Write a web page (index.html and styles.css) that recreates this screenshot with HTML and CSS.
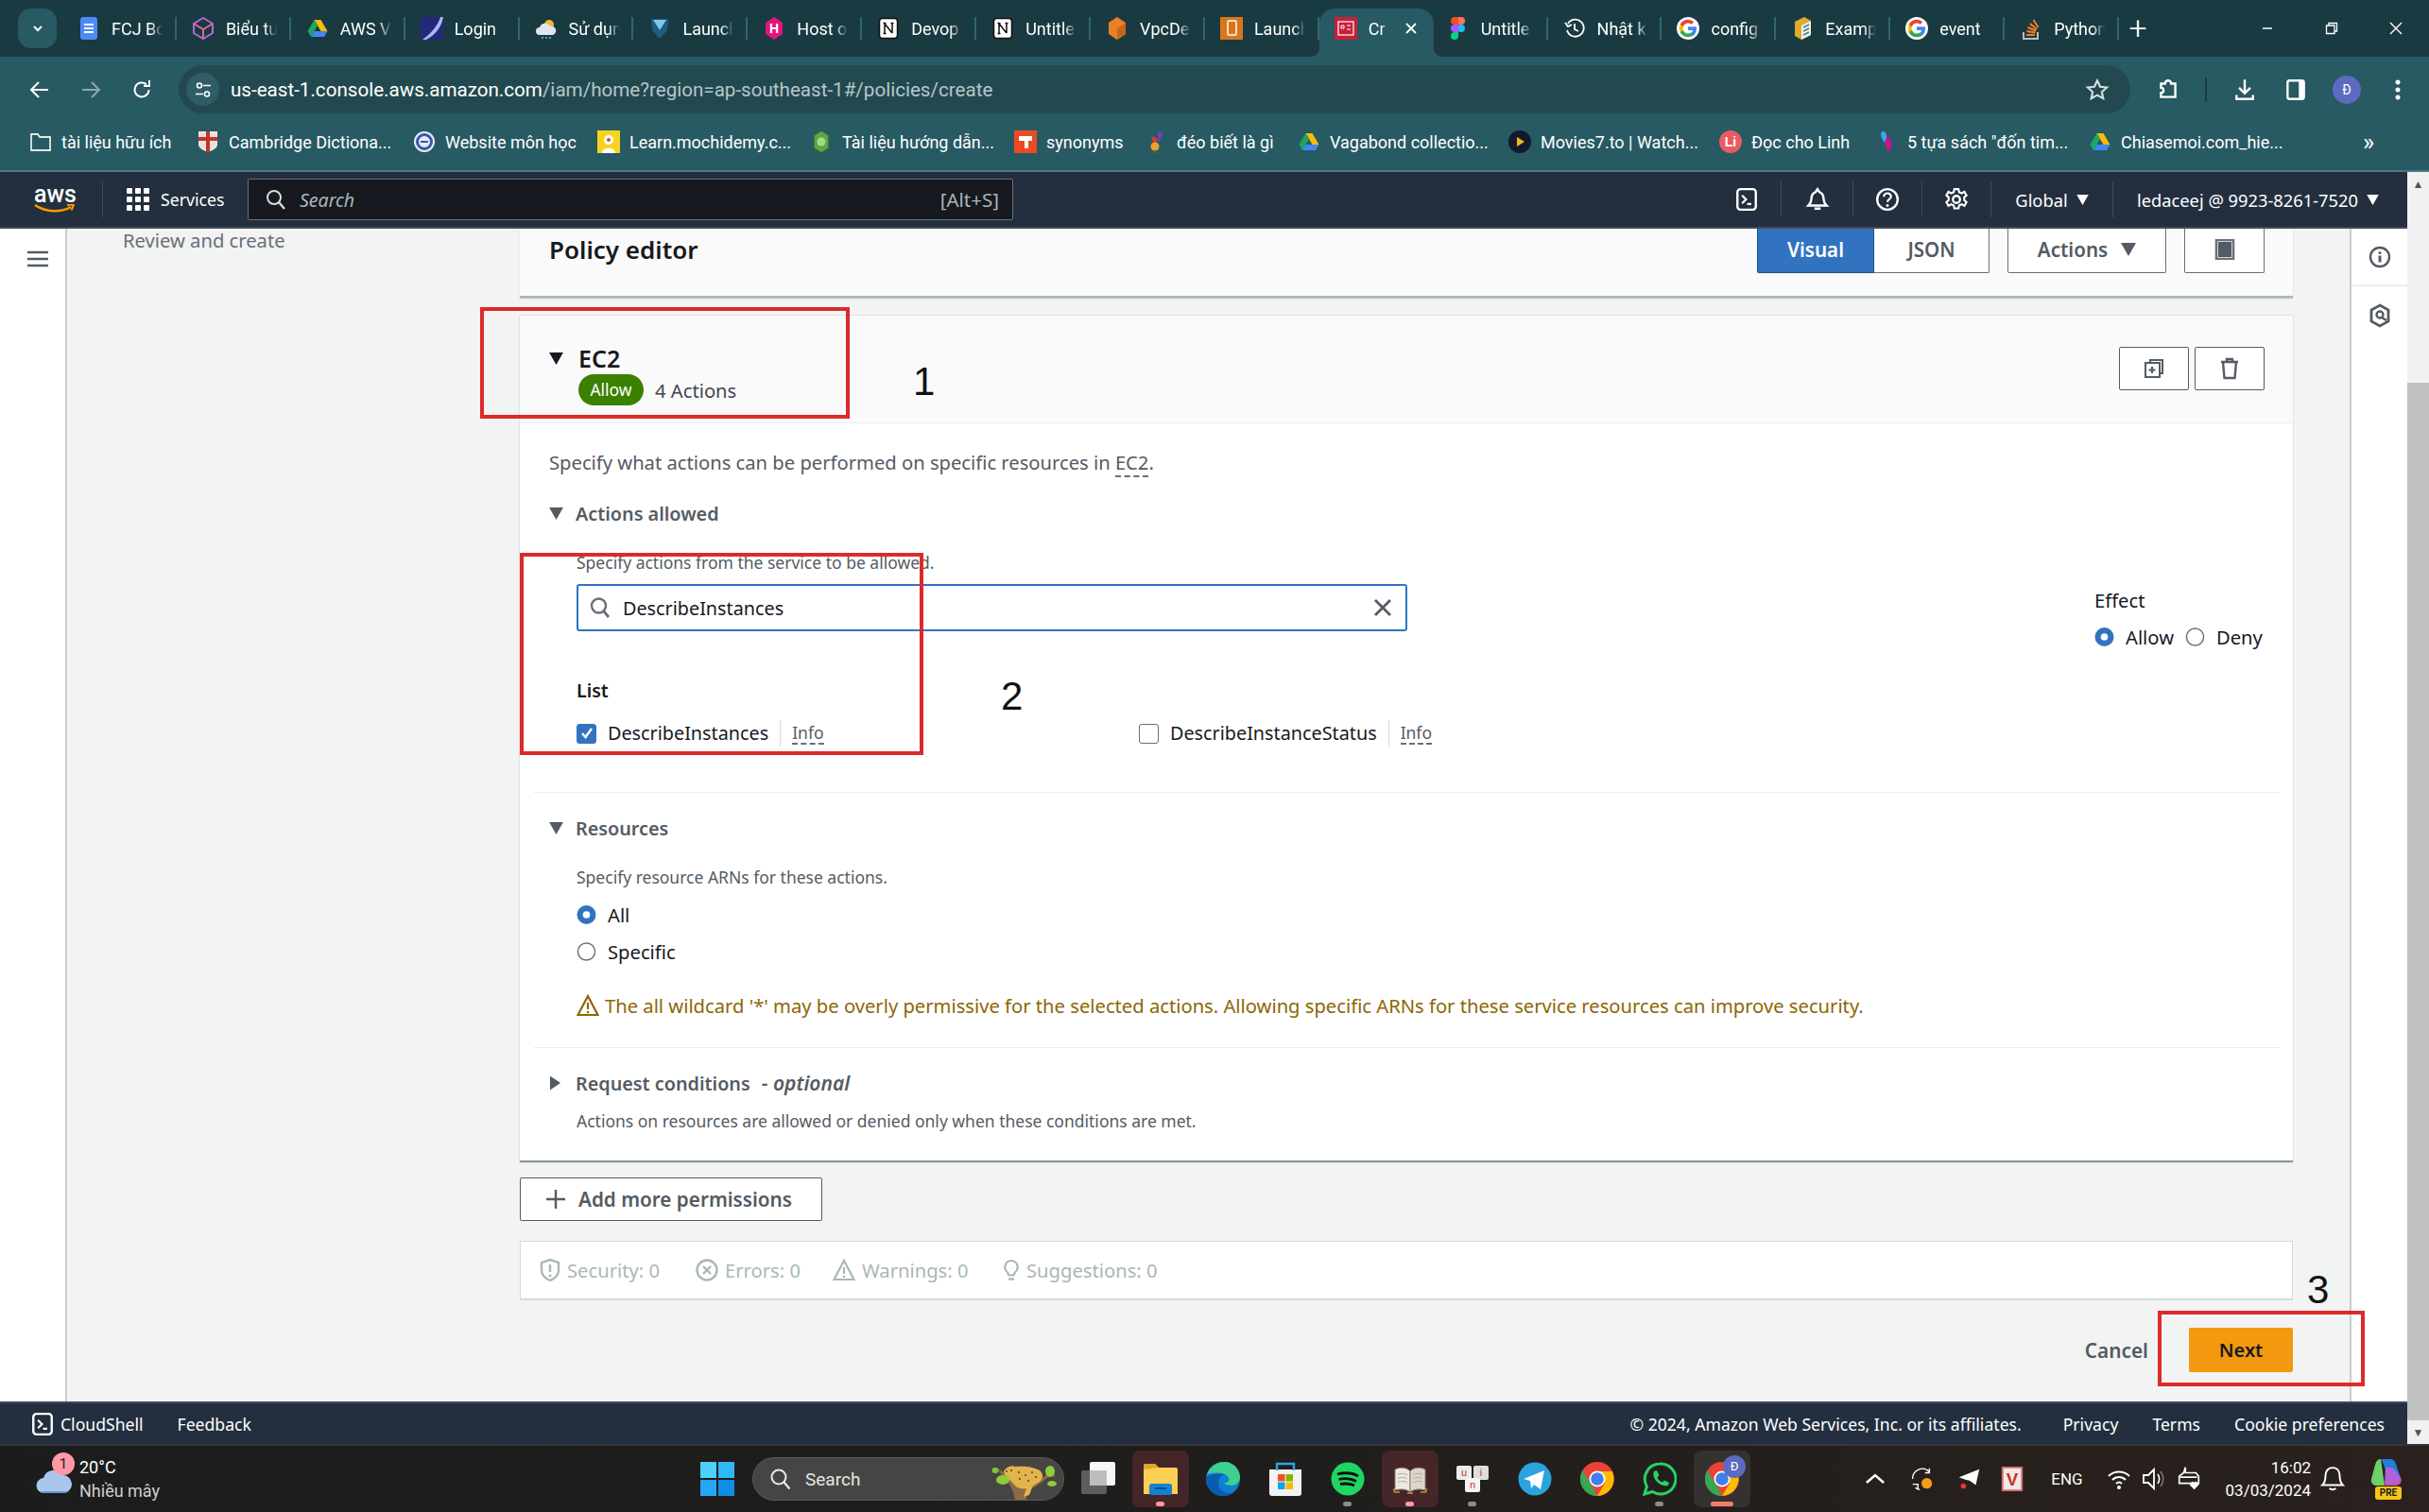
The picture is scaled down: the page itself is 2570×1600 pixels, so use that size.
FILE: index.html
```html
<!DOCTYPE html>
<html lang="en">
<head>
    <meta charset="UTF-8">
    <meta name="viewport" content="width=device-width, initial-scale=1.0">
    <title>Create policy | IAM</title>
    <link rel="stylesheet" href="styles.css">
</head>
<body>

<svg class="defs" width="0" height="0">
    <symbol id="i-g" viewBox="0 0 24 24">
        <circle cx="12" cy="12" r="12" fill="#fff"/>
        <path d="M21 12.2c0-.7-.1-1.3-.2-1.9H12v3.6h5.1c-.2 1.2-.9 2.2-1.9 2.9v2.4h3.1c1.8-1.7 2.7-4.1 2.7-7z" fill="#4285f4"/>
        <path d="M12 21.2c2.5 0 4.6-.8 6.200-2.200l-3.100-2.400c-.8.6-1.900.9-3.100.9-2.400 0-4.400-1.600-5.100-3.800H3.700v2.500c1.500 3 4.700 5 8.300 5z" fill="#34a853"/>
        <path d="M6.900 13.700c-.4-1.100-.4-2.300 0-3.400V7.800H3.700c-1.300 2.600-1.300 5.800 0 8.400z" fill="#fbbc05"/>
        <path d="M12 6.500c1.300 0 2.600.5 3.500 1.400l2.700-2.700C16.500 3.700 14.300 2.800 12 2.800c-3.600 0-6.800 2-8.300 5l3.200 2.500C7.600 8.100 9.600 6.500 12 6.500z" fill="#ea4335"/>
    </symbol>
    <symbol id="i-drive" viewBox="0 0 24 24">
        <path d="M8.500 3h7l7 12h-7z" fill="#fbbc05"/>
        <path d="M8.500 3l-7 12 3.500 6 7-12z" fill="#1fa463"/>
        <path d="M5 21h14l3.500-6h-14z" fill="#4285f4"/>
    </symbol>
    <symbol id="i-notion" viewBox="0 0 24 24">
        <rect x="2.500" y="1.500" width="19" height="21" rx="3" fill="#fff" stroke="#111" stroke-width="1.500"/>
        <path d="M8 7v10M16 7v10M8 7l8 10M6.500 6.500h3M14.500 6.500h3M6.500 17.500h3" fill="none" stroke="#111" stroke-width="1.500"/>
    </symbol>
    <symbol id="i-chrome" viewBox="0 0 36 36">
        <circle cx="18" cy="18" r="18" fill="#ea4335"/>
        <path d="M18 10h15.600A18 18 0 0118 36l8-13.500z" fill="#fbbc04"/>
        <path d="M2.400 9l8.600 14 7 13A18 18 0 012.400 9z" fill="#34a853"/>
        <circle cx="18" cy="18" r="8.500" fill="#fff"/>
        <circle cx="18" cy="18" r="6.800" fill="#3f7ff0"/>
    </symbol>
    <symbol id="i-radio-on" viewBox="0 0 22 22">
        <circle cx="11" cy="11" r="10.500" fill="#3273c0"/>
        <circle cx="11" cy="11" r="4" fill="#fff"/>
    </symbol>
    <symbol id="i-radio-off" viewBox="0 0 22 22">
        <circle cx="11" cy="11" r="9.500" fill="#fff" stroke="#687078" stroke-width="1.500"/>
    </symbol>
    <symbol id="i-term" viewBox="0 0 24 24">
        <rect x="3" y="2" width="18" height="20" rx="3" fill="none" stroke="#fff" stroke-width="2.200"/>
        <path d="M7.500 8l4 4-4 4M12.500 16.500h4" fill="none" stroke="#fff" stroke-width="2"/>
    </symbol>
    <symbol id="i-tri-down" viewBox="0 0 16 14">
        <path d="M0 0h16L8 14z"/>
    </symbol>
</svg>

<div class="tabstrip">
    <button class="tab-menu"><svg width="14" height="14" viewBox="0 0 14 14"><path d="M3 5l4 4 4-4" fill="none" stroke="#fff" stroke-width="2"/></svg></button>
    <div class="tab"><svg class="fav" viewBox="0 0 24 24"><rect x="3" y="0" width="18" height="24" rx="3" fill="#4c8bf5"/><path d="M7 8h10M7 12h10M7 16h10" stroke="#fff" stroke-width="2"/></svg><span class="tab-title">FCJ Bo</span></div>
    <div class="tab"><svg class="fav" viewBox="0 0 24 24"><path d="M12 1l10 6v10l-10 6-10-6V7z" fill="none" stroke="#b06ad8" stroke-width="2"/><path d="M2 7l10 6 10-6M12 13v10" fill="none" stroke="#e0679a" stroke-width="2"/></svg><span class="tab-title">Biểu tư</span></div>
    <div class="tab"><svg class="fav"><use href="#i-drive"/></svg><span class="tab-title">AWS V</span></div>
    <div class="tab"><svg class="fav" viewBox="0 0 24 24"><rect width="24" height="24" fill="#23297a"/><path d="M2 24C10 18 18 10 21 0h3C22 12 14 20 6 24z" fill="#a8b8f0"/></svg><span class="tab-title">Login</span></div>
    <div class="tab"><svg class="fav" viewBox="0 0 24 24"><circle cx="15" cy="8" r="5" fill="#f6b73c"/><path d="M5 19a4 4 0 010-8 6 6 0 0111-1 4.500 4.500 0 013 9z" fill="#dfe6ee"/><path d="M8 21v2M12 21v2M16 21v2" stroke="#7fb0e0" stroke-width="1.500"/></svg><span class="tab-title">Sử dụn</span></div>
    <div class="tab"><svg class="fav" viewBox="0 0 24 24"><path d="M3 2h18l-1 12-8 9-8-9z" fill="#1e5c80"/><path d="M5 3h14l-7 11z" fill="#7cc7ee"/></svg><span class="tab-title">Launch</span></div>
    <div class="tab"><svg class="fav" viewBox="0 0 24 24"><path d="M12 0l9 6v12l-9 6-9-6V6z" fill="#e6127f"/><text x="12" y="17" class="fav-letter">H</text></svg><span class="tab-title">Host o</span></div>
    <div class="tab"><svg class="fav"><use href="#i-notion"/></svg><span class="tab-title">Devop</span></div>
    <div class="tab"><svg class="fav"><use href="#i-notion"/></svg><span class="tab-title">Untitle</span></div>
    <div class="tab"><svg class="fav" viewBox="0 0 24 24"><path d="M12 0l9 6v12l-9 6-9-6V6z" fill="#e8822a"/><path d="M12 12l9-6v12l-9 6z" fill="#c9651a"/></svg><span class="tab-title">VpcDe</span></div>
    <div class="tab"><svg class="fav" viewBox="0 0 24 24"><rect width="24" height="24" fill="#d9761d"/><rect x="8" y="4" width="9" height="15" rx="1.500" fill="none" stroke="#fff" stroke-width="1.500"/></svg><span class="tab-title">Launch</span></div>
    <div class="tab tab-active"><svg class="fav" viewBox="0 0 24 24"><rect width="24" height="24" fill="#c7203a"/><rect x="4" y="5" width="16" height="14" fill="none" stroke="#fff" stroke-width="1.200"/><path d="M7 9h3v3H7zM13 9h4M13 13h4" stroke="#fff" fill="none"/></svg><span class="tab-title tab-title-short">Cr</span><svg class="tab-close" viewBox="0 0 14 14"><path d="M2 2l10 10M12 2L2 12" stroke="#fff" stroke-width="1.800"/></svg></div>
    <div class="tab tab-after"><svg class="fav" viewBox="0 0 24 24"><circle cx="15" cy="12" r="4" fill="#1abcfe"/><path d="M8 0h4v8H8a4 4 0 010-8z" fill="#f24e1e"/><path d="M12 0h3a4 4 0 010 8h-3z" fill="#ff7262"/><path d="M8 8h4v8H8a4 4 0 010-8z" fill="#a259ff"/><path d="M8 16h4v4a4 4 0 11-4-4z" fill="#0acf83"/></svg><span class="tab-title">Untitle</span></div>
    <div class="tab"><svg class="fav" viewBox="0 0 24 24"><path d="M5 7a9 9 0 11-1 7M2 6l3 4 4-2M12 7v6l4 2" fill="none" stroke="#fff" stroke-width="1.800"/></svg><span class="tab-title">Nhật k</span></div>
    <div class="tab"><svg class="fav"><use href="#i-g"/></svg><span class="tab-title">config</span></div>
    <div class="tab"><svg class="fav" viewBox="0 0 24 24"><path d="M4 5l10-5 7 4v15l-10 5-7-4z" fill="#e0a92e"/><path d="M11 9l10-5v15l-10 5z" fill="#f6f1d8"/><path d="M13 11l6-3M13 15l6-3M13 19l6-3" stroke="#3d7ab8" stroke-width="1.500"/></svg><span class="tab-title">Examp</span></div>
    <div class="tab"><svg class="fav"><use href="#i-g"/></svg><span class="tab-title">event</span></div>
    <div class="tab"><svg class="fav" viewBox="0 0 24 24"><path d="M4 16v7h15v-7" fill="none" stroke="#bcbbbb" stroke-width="2"/><path d="M7 19h9M7.500 15l9 1.500M8.500 11l8.500 3.500M11 7l7 6M14.500 3l5 8" stroke="#f48024" stroke-width="2"/></svg><span class="tab-title">Python</span></div>
    <div class="tab-new">+</div>
    <div class="win-controls">
        <svg class="win-btn" viewBox="0 0 14 14"><path d="M2 7h10" stroke="#fff" stroke-width="1.500"/></svg>
        <svg class="win-btn" viewBox="0 0 14 14"><path d="M1.500 4h8.500v8.500H1.500zM4 4V1.500h8.500V10H10" fill="none" stroke="#fff" stroke-width="1.300"/></svg>
        <svg class="win-btn" viewBox="0 0 14 14"><path d="M1 1l12 12M13 1L1 13" stroke="#fff" stroke-width="1.400"/></svg>
    </div>
</div>

<div class="toolbar">
    <button class="tool-btn"><svg width="22" height="22" viewBox="0 0 22 22"><path d="M20 11H3M10 3l-8 8 8 8" fill="none" stroke="#fff" stroke-width="2"/></svg></button>
    <button class="tool-btn"><svg width="22" height="22" viewBox="0 0 22 22"><path d="M2 11h17M12 3l8 8-8 8" fill="none" stroke="#8fa8ad" stroke-width="2"/></svg></button>
    <button class="tool-btn"><svg width="22" height="22" viewBox="0 0 22 22"><path d="M18.500 11a7.500 7.500 0 11-2.500-5.600M19 1v6h-6" fill="none" stroke="#fff" stroke-width="2"/></svg></button>
    <div class="omnibox">
        <span class="site-btn"><svg width="20" height="20" viewBox="0 0 20 20"><circle cx="6" cy="5.500" r="2.500" fill="none" stroke="#fff" stroke-width="1.600"/><circle cx="14" cy="14.500" r="2.500" fill="none" stroke="#fff" stroke-width="1.600"/><path d="M10 5.500h8M2 14.500h8" stroke="#fff" stroke-width="1.600"/></svg></span>
        <span class="url"><span class="url-host">us-east-1.console.aws.amazon.com</span>/iam/home?region=ap-southeast-1#/policies/create</span>
        <svg class="star" width="26" height="26" viewBox="0 0 24 24"><path d="M12 3l2.800 6 6.500.7-4.800 4.400 1.300 6.400-5.800-3.300-5.800 3.300 1.300-6.400L2.700 9.700 9.200 9z" fill="none" stroke="#d5dcdd" stroke-width="2"/></svg>
    </div>
    <button class="tool-btn tool-ext"><svg width="26" height="26" viewBox="0 0 24 24"><path d="M6 6h3a3 3 0 016 0h4v13H5v-4a2.500 2.500 0 000-5V6z" fill="none" stroke="#fff" stroke-width="2.200"/></svg></button>
    <span class="tool-sep"></span>
    <button class="tool-btn"><svg width="26" height="26" viewBox="0 0 24 24"><path d="M12 2v13M6.500 10l5.500 5.500 5.500-5.500M4 17v4h16v-4" fill="none" stroke="#fff" stroke-width="2.200"/></svg></button>
    <button class="tool-btn"><svg width="26" height="26" viewBox="0 0 24 24"><rect x="4" y="3" width="16" height="18" rx="2" fill="none" stroke="#fff" stroke-width="2.200"/><path d="M15 3v18h5V3z" fill="#fff"/></svg></button>
    <button class="tool-btn"><span class="avatar">Đ</span></button>
    <button class="tool-btn"><svg width="8" height="26" viewBox="0 0 8 26"><circle cx="4" cy="5" r="2.500" fill="#fff"/><circle cx="4" cy="13" r="2.500" fill="#fff"/><circle cx="4" cy="21" r="2.500" fill="#fff"/></svg></button>
</div>

<div class="bookmarks">
    <a class="bm"><svg class="fav-sm" viewBox="0 0 24 24"><path d="M2 4h7l2 3h11v14H2z" fill="none" stroke="#e3e8e9" stroke-width="1.800"/></svg>tài liệu hữu ích</a>
    <a class="bm"><svg class="fav-sm" viewBox="0 0 24 24"><path d="M2 1h20v14c0 4-5 6-10 8-5-2-10-4-10-8z" fill="#e8e3d8"/><path d="M12 1v22M2 9h20" stroke="#c4342a" stroke-width="4"/></svg>Cambridge Dictiona...</a>
    <a class="bm"><svg class="fav-sm" viewBox="0 0 24 24"><circle cx="12" cy="12" r="11" fill="#e8edf5"/><circle cx="12" cy="12" r="7.500" fill="none" stroke="#3a5aa8" stroke-width="3"/><path d="M8 12h8" stroke="#3a5aa8" stroke-width="2"/></svg>Website môn học</a>
    <a class="bm"><svg class="fav-sm" viewBox="0 0 24 24"><rect width="24" height="24" fill="#f7d31e"/><circle cx="12" cy="10" r="5" fill="#fff"/><path d="M5 24c0-7 14-7 14 0z" fill="#fff"/><circle cx="12" cy="10" r="2" fill="#c4562a"/></svg>Learn.mochidemy.c...</a>
    <a class="bm"><svg class="fav-sm" viewBox="0 0 24 24"><path d="M12 0l8 5v14l-8 5-8-5V5z" fill="#5aa84a" stroke="#2f6b32" stroke-width="1.500"/><circle cx="12" cy="12" r="4.500" fill="#a5d88a"/></svg>Tài liệu hướng dẫn...</a>
    <a class="bm"><svg class="fav-sm" viewBox="0 0 24 24"><rect width="24" height="24" fill="#ea4b25"/><path d="M5 6h14v5h-4v8h-4v-8H5z" fill="#fff"/></svg>synonyms</a>
    <a class="bm"><svg class="fav-sm" viewBox="0 0 24 24"><path d="M14 1l5 2-4 10z" fill="#7a3fc0"/><path d="M7 6l7 3-3 9z" fill="#d83a3a"/><circle cx="11" cy="17" r="4.500" fill="#e8a12e"/><path d="M10 21l1 3" stroke="#3a8a3a" stroke-width="2"/></svg>đéo biết là gì</a>
    <a class="bm"><svg class="fav-sm"><use href="#i-drive"/></svg>Vagabond collectio...</a>
    <a class="bm"><svg class="fav-sm" viewBox="0 0 24 24"><circle cx="12" cy="12" r="12" fill="#131a2b"/><path d="M9 7l8 5-8 5z" fill="#f5b81c"/></svg>Movies7.to | Watch...</a>
    <a class="bm"><svg class="fav-sm" viewBox="0 0 24 24"><circle cx="12" cy="12" r="12" fill="#ea5b5f"/><text x="12" y="17" class="fav-letter">Li</text></svg>Đọc cho Linh</a>
    <a class="bm"><svg class="fav-sm" viewBox="0 0 24 24"><path d="M8 1c5 0 5 8 2 12-3-3-6-12-2-12z" fill="#3aa7e8"/><path d="M12 7c7 1 7 11 2 16-3-4-1-7-4-10z" fill="#c4168c"/></svg>5 tựa sách "đốn tim...</a>
    <a class="bm"><svg class="fav-sm"><use href="#i-drive"/></svg>Chiasemoi.com_hie...</a>
    <span class="bm-more">»</span>
</div>

<div class="page">
    <div class="page-col">
        <nav class="aws-nav">
            <span class="aws-logo">
                <span class="aws-word">aws</span>
                <svg width="44" height="10" viewBox="0 0 44 10"><path d="M1 1c12 8 28 8 38 2" fill="none" stroke="#f90" stroke-width="2.400"/><path d="M35 1l7-.5-2.500 6" fill="none" stroke="#f90" stroke-width="2"/></svg>
            </span>
            <span class="services">
                <svg width="24" height="24" viewBox="0 0 24 24" fill="#fff"><rect width="6" height="6" rx="1"/><rect x="9" width="6" height="6" rx="1"/><rect x="18" width="6" height="6" rx="1"/><rect y="9" width="6" height="6" rx="1"/><rect x="9" y="9" width="6" height="6" rx="1"/><rect x="18" y="9" width="6" height="6" rx="1"/><rect y="18" width="6" height="6" rx="1"/><rect x="9" y="18" width="6" height="6" rx="1"/><rect x="18" y="18" width="6" height="6" rx="1"/></svg>
                Services
            </span>
            <div class="nav-search">
                <svg width="22" height="22" viewBox="0 0 22 22"><circle cx="9" cy="9" r="7" fill="none" stroke="#d5dbdb" stroke-width="2"/><path d="M14 14l6 7" stroke="#d5dbdb" stroke-width="2.400"/></svg>
                <span class="nav-search-ph">Search</span>
                <span class="nav-search-key">[Alt+S]</span>
            </div>
            <div class="nav-right">
                <span class="nav-cell cell-shell"><svg width="26" height="26"><use href="#i-term"/></svg></span>
                <span class="nav-cell cell-bell"><svg width="26" height="26" viewBox="0 0 24 24"><path d="M12 2l2 3c3 1 4 4 4 7 0 3 1 4 3 6H3c2-2 3-3 3-6 0-3 1-6 4-7z" fill="none" stroke="#fff" stroke-width="2.200"/><path d="M9 21h6" stroke="#fff" stroke-width="2.400"/></svg></span>
                <span class="nav-cell cell-help"><svg width="26" height="26" viewBox="0 0 24 24"><circle cx="12" cy="12" r="10" fill="none" stroke="#fff" stroke-width="2.200"/><path d="M8.500 9.500a3.500 3.500 0 117 0c0 2-3.500 2.500-3.500 5" fill="none" stroke="#fff" stroke-width="2"/><circle cx="12" cy="18" r="1.300" fill="#fff"/></svg></span>
                <span class="nav-cell cell-help"><svg width="26" height="26" viewBox="0 0 24 24"><circle cx="12" cy="12" r="3.500" fill="none" stroke="#fff" stroke-width="2.200"/><path d="M10 2h4l.7 3 2.500 1 2.600-1.500 2 3.500-2.200 2v2.800l2.200 2-2 3.500-2.600-1.500-2.500 1-.7 3h-4l-.7-3-2.500-1-2.600 1.500-2-3.500 2.200-2v-2.800l-2.200-2 2-3.500L6.800 6l2.500-1z" fill="none" stroke="#fff" stroke-width="2"/></svg></span>
                <span class="nav-cell cell-global">Global<svg class="nav-caret"><use href="#i-tri-down"/></svg></span>
                <span class="nav-cell cell-user">ledaceej @ 9923-8261-7520<svg class="nav-caret"><use href="#i-tri-down"/></svg></span>
            </div>
        </nav>

        <div class="console">
            <aside class="side-rail">
                <svg width="24" height="20" viewBox="0 0 24 20"><path d="M1 3h22M1 10h22M1 17h22" stroke="#545b64" stroke-width="2.400"/></svg>
            </aside>
            <div class="content">
                <div class="wizard-nav">Review and create</div>
                <main class="editor">
                    <section class="policy-head">
                        <h2 class="policy-title">Policy editor</h2>
                        <div class="policy-tools">
                            <span class="seg seg-on">Visual</span>
                            <span class="seg seg-json">JSON</span>
                            <span class="btn-actions">Actions<svg class="actions-caret"><use href="#i-tri-down"/></svg></span>
                            <span class="btn-panel"><svg width="22" height="22" viewBox="0 0 22 22"><rect x="2" y="1" width="18" height="20" fill="none" stroke="#687078" stroke-width="2.600"/><rect x="4" y="3" width="14" height="16" fill="#545b64"/></svg></span>
                        </div>
                    </section>

                    <section class="service-card">
                        <header class="service-head">
                            <svg class="tri-big"><use href="#i-tri-down"/></svg>
                            <div>
                                <div class="service-name">EC2</div>
                                <div class="service-sub"><span class="pill-allow">Allow</span>4 Actions</div>
                            </div>
                            <div class="service-tools">
                                <span class="btn-icon"><svg width="24" height="24" viewBox="0 0 24 24" fill="none" stroke="#545b64" stroke-width="2"><path d="M8 6V3h13v14h-3"/><path d="M5 6h13v15H3V6z"/><path d="M10 10v7M6.500 13.500h7" stroke-width="2.200"/></svg></span>
                                <span class="btn-icon"><svg width="24" height="24" viewBox="0 0 24 24" fill="none" stroke="#545b64" stroke-width="2.400"><path d="M3 5h18M9 5V2h6v3M5 5l1.500 17h11L19 5"/></svg></span>
                            </div>
                        </header>

                        <div class="service-body">
                            <p class="intro">Specify what actions can be performed on specific resources in <span class="dotted">EC2</span>.</p>

                            <div class="sec-head sec-actions"><svg class="tri"><use href="#i-tri-down"/></svg>Actions allowed</div>

                            <div class="actions-row">
                                <div class="actions-left">
                                    <p class="hint hint-actions">Specify actions from the service to be allowed.</p>
                                    <div class="filter">
                                        <svg width="22" height="24" viewBox="0 0 22 24"><circle cx="9.500" cy="10" r="7.500" fill="none" stroke="#687078" stroke-width="2.400"/><path d="M15 16l5 6" stroke="#687078" stroke-width="2.800"/></svg>
                                        <span class="filter-text">DescribeInstances</span>
                                        <svg class="filter-x" width="20" height="20" viewBox="0 0 20 20"><path d="M2 2l16 16M18 2L2 18" stroke="#545b64" stroke-width="2.800"/></svg>
                                    </div>
                                    <div class="group-name">List</div>
                                    <div class="check-grid">
                                        <label class="check"><span class="box box-on"><svg width="16" height="16" viewBox="0 0 16 16"><path d="M3 8l3.500 4L13 3" fill="none" stroke="#fff" stroke-width="2.400"/></svg></span><span class="check-text">DescribeInstances</span><span class="dotted info">Info</span></label>
                                        <label class="check"><span class="box"></span><span class="check-text">DescribeInstanceStatus</span><span class="dotted info">Info</span></label>
                                    </div>
                                </div>
                                <div class="effect">
                                    <div class="effect-label">Effect</div>
                                    <div class="effect-opts">
                                        <svg class="radio"><use href="#i-radio-on"/></svg><span class="effect-allow">Allow</span>
                                        <svg class="radio"><use href="#i-radio-off"/></svg><span>Deny</span>
                                    </div>
                                </div>
                            </div>

                            <div class="divider divider-a"></div>

                            <div class="sec-head sec-res"><svg class="tri"><use href="#i-tri-down"/></svg>Resources</div>
                            <p class="hint hint-res">Specify resource ARNs for these actions.</p>
                            <div class="radio-row radio-all"><svg class="radio"><use href="#i-radio-on"/></svg>All</div>
                            <div class="radio-row radio-spec"><svg class="radio"><use href="#i-radio-off"/></svg>Specific</div>
                            <div class="warn">
                                <svg width="24" height="24" viewBox="0 0 24 24"><path d="M12 2l10.500 20h-21z" fill="none" stroke="#8d6605" stroke-width="2.200"/><path d="M12 9v7" stroke="#8d6605" stroke-width="2.200"/><circle cx="12" cy="19" r="1.300" fill="#8d6605"/></svg>
                                <span>The all wildcard '*' may be overly permissive for the selected actions. Allowing specific ARNs for these service resources can improve security.</span>
                            </div>

                            <div class="divider divider-b"></div>

                            <div class="sec-head sec-req"><svg class="tri tri-right" viewBox="0 0 14 16"><path d="M1 0l12 8-12 8z"/></svg>Request conditions<em class="optional">- optional</em></div>
                            <p class="hint hint-req">Actions on resources are allowed or denied only when these conditions are met.</p>
                        </div>
                    </section>

                    <button class="btn-add"><svg width="22" height="22" viewBox="0 0 22 22"><path d="M11 1v20M1 11h20" stroke="#545b64" stroke-width="2.400"/></svg>Add more permissions</button>

                    <div class="status-bar">
                        <span class="stat stat-sec"><svg width="22" height="26" viewBox="0 0 22 26"><path d="M11 2l9 3v8c0 6-4 9-9 11-5-2-9-5-9-11V5z" fill="none" stroke="#aab7b8" stroke-width="2.400"/><path d="M11 7v8" stroke="#aab7b8" stroke-width="2.400"/><circle cx="11" cy="19" r="1.500" fill="#aab7b8"/></svg>Security: 0</span>
                        <span class="stat stat-err"><svg width="24" height="24" viewBox="0 0 24 24"><circle cx="12" cy="12" r="10.500" fill="none" stroke="#aab7b8" stroke-width="2.400"/><path d="M8 8l8 8M16 8l-8 8" stroke="#aab7b8" stroke-width="2.400"/></svg>Errors: 0</span>
                        <span class="stat stat-warn"><svg width="24" height="24" viewBox="0 0 24 24"><path d="M12 2l10.500 20h-21z" fill="none" stroke="#aab7b8" stroke-width="2.200"/><path d="M12 9v7" stroke="#aab7b8" stroke-width="2.200"/><circle cx="12" cy="19" r="1.300" fill="#aab7b8"/></svg>Warnings: 0</span>
                        <span class="stat"><svg width="18" height="24" viewBox="0 0 18 24"><path d="M9 2a7 7 0 00-4 12.500l1.500 3h5l1.500-3A7 7 0 009 2z" fill="none" stroke="#aab7b8" stroke-width="2.200"/><path d="M6 21.500h6" stroke="#aab7b8" stroke-width="2.400"/></svg>Suggestions: 0</span>
                    </div>

                    <div class="wizard-actions">
                        <span class="btn-cancel">Cancel</span>
                        <button class="btn-next">Next</button>
                    </div>
                </main>
            </div>
            <aside class="tool-rail">
                <span class="rail-cell"><svg width="24" height="24" viewBox="0 0 24 24"><circle cx="12" cy="12" r="10" fill="none" stroke="#545b64" stroke-width="2.400"/><circle cx="12" cy="7.500" r="1.500" fill="#545b64"/><path d="M12 10.500v7" stroke="#545b64" stroke-width="3"/></svg></span>
                <span class="rail-cell rail-second"><svg width="24" height="26" viewBox="0 0 24 26"><path d="M12 2l9 5v12l-9 5-9-5V7z" fill="none" stroke="#545b64" stroke-width="2.800"/><circle cx="12" cy="12" r="3.500" fill="none" stroke="#545b64" stroke-width="2.400"/><path d="M14 15l5 3" stroke="#545b64" stroke-width="2.600"/></svg></span>
            </aside>
        </div>

        <footer class="aws-foot">
            <span class="foot-shell"><svg width="26" height="26"><use href="#i-term"/></svg>CloudShell</span>
            <span class="foot-feedback">Feedback</span>
            <span class="foot-copy">© 2024, Amazon Web Services, Inc. or its affiliates.</span>
            <span class="foot-link foot-privacy">Privacy</span>
            <span class="foot-link">Terms</span>
            <span class="foot-link">Cookie preferences</span>
        </footer>
    </div>
    <div class="scrollbar">
        <span class="scroll-arrow">▲</span>
        <span class="scroll-thumb"></span>
        <span class="scroll-arrow">▼</span>
    </div>
</div>

<div class="taskbar">
    <div class="weather">
        <svg width="38" height="34" viewBox="0 0 38 34"><path d="M9 32a8 8 0 01-1-16 11 11 0 0120-3 9.500 9.500 0 011 19z" fill="#a9c6ee"/><path d="M9 32a8 8 0 01-4-2h30a9 9 0 01-6 2z" fill="#6e95d8"/></svg>
        <span class="weather-text"><span class="temp">20°C</span><span class="cond">Nhiều mây</span></span>
        <span class="weather-badge">1</span>
    </div>
    <svg class="win-logo" viewBox="0 0 36 36"><path d="M0 0h17v17H0z" fill="#4fd0fb"/><path d="M19 0h17v17H19z" fill="#2fb8f6"/><path d="M0 19h17v17H0z" fill="#22a8f4"/><path d="M19 19h17v17H19z" fill="#0f8de8"/></svg>
    <div class="task-search">
        <svg width="24" height="24" viewBox="0 0 24 24"><circle cx="10" cy="10" r="7.500" fill="none" stroke="#e8e8e8" stroke-width="2"/><path d="M15.500 15.500l6 7" stroke="#e8e8e8" stroke-width="2.200"/></svg>
        <span class="task-search-text">Search</span>
        <svg class="cheetah" width="74" height="38" viewBox="0 0 74 38"><path d="M6 4l6 8c6 5 12 14 14 26h12c0-8 4-12 10-14l16-12 4 2-1-4-4 0-14 8c-4 2-8 2-12 1L12 8z" fill="#8b6a4a"/><path d="M14 8c3-5 8-7 12-5 8-1 20 0 26 4 4 3 4 9 0 12-3 2-6 3-8 6l-3 8-6 2 3-9c-4 1-9 0-12-3-3-3-5-6-8-8-2-1-3-4-4-7z" fill="#e2b44e"/><g fill="#5a3e1c"><circle cx="30" cy="9" r="1"/><circle cx="37" cy="12" r="1"/><circle cx="44" cy="9" r="1"/><circle cx="31" cy="16" r="1"/><circle cx="40" cy="18" r="1"/><circle cx="48" cy="14" r="1"/><circle cx="22" cy="7" r="1"/><circle cx="17" cy="8" r="1"/></g><ellipse cx="5" cy="7" rx="3.500" ry="3" fill="#86c232"/><ellipse cx="13" cy="17" rx="7" ry="5" fill="#8fcb3a"/><ellipse cx="63" cy="8" rx="5" ry="6" fill="#8fcb3a"/><ellipse cx="65" cy="21" rx="5" ry="3" fill="#8fcb3a"/></svg>
    </div>
    <div class="task-apps">
        <span class="app"><svg class="app-icon" viewBox="0 0 36 36"><rect x="0" y="9" width="27" height="25" rx="2" fill="#5e5e5e"/><rect x="9" y="0" width="27" height="25" rx="2" fill="#f6f6f6"/><rect x="9" y="9" width="18" height="16" fill="#bdbdbd"/></svg></span>
        <span class="app app-open"><svg class="app-icon" viewBox="0 0 36 34"><path d="M0 3a2 2 0 012-2h10l4 4h18a2 2 0 012 2v26H0z" fill="#fcd052"/><path d="M0 7V3a2 2 0 012-2h10l4 4z" fill="#e0a52a"/><rect x="6" y="22" width="24" height="12" rx="3" fill="#1482d2"/><path d="M12 27h12" stroke="#0b4f8a" stroke-width="2"/></svg><i class="dot dot-pink"></i></span>
        <span class="app"><svg class="app-icon" viewBox="0 0 36 36"><circle cx="18" cy="18" r="18" fill="#0f7fd4"/><path d="M1 14C4 4 13 0 20 0c9 0 16 8 16 16 0 5-4 9-9 9-4 0-7-1-8-3 4 0 6-2 5-5-2-6-19-7-23-3z" fill="#3fcf8e"/><path d="M0 18c0 10 8 18 18 18 5 0 9-2 12-4-9 3-17-2-17-10 0-4 2-7 6-9-8-1-19 0-19 5z" fill="#0a5cb0"/></svg></span>
        <span class="app"><svg class="app-icon" viewBox="0 0 36 36"><path d="M1 8h34v25a3 3 0 01-3 3H4a3 3 0 01-3-3z" fill="#f3f3f3"/><path d="M9 9V2h18v7" fill="none" stroke="#29a8e0" stroke-width="2.400"/><rect x="10" y="13" width="7.500" height="7.500" fill="#f25022"/><rect x="18.500" y="13" width="7.500" height="7.500" fill="#7fba00"/><rect x="10" y="21.500" width="7.500" height="7.500" fill="#00a4ef"/><rect x="18.500" y="21.500" width="7.500" height="7.500" fill="#ffb900"/></svg></span>
        <span class="app"><svg class="app-icon" viewBox="0 0 36 36"><circle cx="18" cy="18" r="17.500" fill="#1ed760"/><path d="M7 13c8-2 16-1.500 22 2M8.500 18.500c7-1.500 13-1 18.500 2M10 23.500c6-1 11-.5 15 1.500" fill="none" stroke="#111" stroke-width="2.800"/></svg><i class="dot"></i></span>
        <span class="app app-open"><svg class="app-icon" viewBox="0 0 36 34"><path d="M2 7c6-3 13-2 16 2v22c-3-3-10-4-16-2z" fill="#ece8e0" stroke="#8d8070"/><path d="M34 7c-6-3-13-2-16 2v22c3-3 10-4 16-2z" fill="#ddd7cb" stroke="#8d8070"/><path d="M5 12c4-1 8-1 10 1M5 16c4-1 8-1 10 1M5 20c4-1 8-1 10 1M31 12c-4-1-8-1-10 1M31 16c-4-1-8-1-10 1M31 20c-4-1-8-1-10 1" stroke="#b5ad9f" fill="none"/><path d="M1 31h6M15 32h6M29 31h6M1 27v4M35 27v4" stroke="#a87c2c" stroke-width="2"/></svg><i class="dot dot-pink"></i></span>
        <span class="app"><svg class="app-icon" viewBox="0 0 36 30"><rect x="1" y="1" width="16" height="15" rx="2" fill="#ececec"/><rect x="19" y="1" width="16" height="15" rx="2" fill="#dedede"/><rect x="10" y="14" width="16" height="15" rx="2" fill="#f4f4f4"/><text x="9" y="12" class="key-letter">u</text><text x="27" y="12" class="key-letter">i</text><text x="18" y="25" class="key-letter">n</text></svg><i class="dot"></i></span>
        <span class="app"><svg class="app-icon" viewBox="0 0 36 36"><circle cx="18" cy="18" r="17.500" fill="#2aa3de"/><path d="M6 18L28 9l-4 20-7-5-3 4-1-8z" fill="#fff"/></svg></span>
        <span class="app"><svg class="app-icon"><use href="#i-chrome"/></svg></span>
        <span class="app"><svg class="app-icon" viewBox="0 0 36 36"><path d="M18 2A16 16 0 004.500 26L2 34l8.500-2.500A16 16 0 1018 2z" fill="none" stroke="#25d366" stroke-width="3"/><path d="M12 10l3-1 2.500 5-2 2.500c1 2.500 3 4 5 5l2.500-2 5 2.500-1 3c-9 2-18-8-15-15z" fill="#25d366"/></svg><i class="dot"></i></span>
        <span class="app app-chrome"><svg class="app-icon"><use href="#i-chrome"/></svg><span class="chrome-badge">Đ</span><i class="dot dot-wide"></i></span>
    </div>
    <div class="tray">
        <svg class="tray-i" viewBox="0 0 20 20"><path d="M3 13l7-6 7 6" fill="none" stroke="#fff" stroke-width="2"/></svg>
        <svg class="tray-i" viewBox="0 0 26 30"><path d="M22 7A11 11 0 003 15M22 3v5h-5M6 25c1 1 3 2 5 2M3 21h6v5" fill="none" stroke="#fff" stroke-width="1.500"/><circle cx="19" cy="20" r="6" fill="#f59a1c"/></svg>
        <svg class="tray-i" viewBox="0 0 26 30"><path d="M25 4L2 13l8 3 4 1 7 5z" fill="#fff"/><circle cx="7" cy="23" r="3" fill="#e83535"/></svg>
        <svg class="tray-i" viewBox="0 0 26 30"><rect x="2" y="2" width="22" height="26" fill="#f1e8e8" stroke="#d56a6a" stroke-width="2"/><text x="13" y="23" class="tray-v">V</text></svg>
        <span class="tray-eng">ENG</span>
        <svg class="tray-i" viewBox="0 0 26 26"><path d="M2 10c6-6 16-6 22 0M6 14c4-4 10-4 14 0M10 18c2-2 4-2 6 0" fill="none" stroke="#fff" stroke-width="2"/><circle cx="13" cy="22" r="2" fill="#fff"/></svg>
        <svg class="tray-i" viewBox="0 0 26 26"><path d="M3 9h5l6-6v20l-6-6H3z" fill="none" stroke="#fff" stroke-width="1.800"/><path d="M18 8c2 3 2 7 0 10" fill="none" stroke="#fff" stroke-width="1.600"/><path d="M21 5c3.500 5 3.500 11 0 16" fill="none" stroke="#777" stroke-width="1.600"/></svg>
        <svg class="tray-i" viewBox="0 0 26 30"><path d="M7 8l2-6v6h12l3 4v8H7l-5 0v-8z" fill="none" stroke="#fff" stroke-width="1.800"/><path d="M3 13h19" stroke="#fff" stroke-width="1.800"/><path d="M14 20l3-2 2 1 2-1 3 2v2l-5 5-5-5z" fill="#fff"/></svg>
        <div class="clock"><span>16:02</span><span>03/03/2024</span></div>
        <svg class="tray-i tray-bell" viewBox="0 0 24 26"><path d="M12 2c5 0 7 4 7 8 0 4 1 7 3 9H2c2-2 3-5 3-9 0-4 2-8 7-8z" fill="none" stroke="#fff" stroke-width="1.800"/><path d="M9 22c1 2 5 2 6 0" fill="none" stroke="#fff" stroke-width="1.800"/></svg>
        <span class="copilot">
            <svg width="36" height="34" viewBox="0 0 36 34"><path d="M12 1h10c3 0 5 2 6 5l5 15H20L15 7c-1-3-3-6-3-6z" fill="#1f7fdc"/><path d="M12 1C8 1 7 4 6 7L2 22c-1 4 2 7 5 7h9z" fill="#6fd06a"/><path d="M20 21h13c2 4-1 8-5 8h-12z" fill="#d84fb0"/><path d="M17 10h8l8 11-3 6H16z" fill="#b060d8"/></svg>
            <span class="copilot-pre">PRE</span>
        </span>
    </div>
</div>

<!-- annotations drawn over the screenshot -->
<div class="mark mark-1"></div>
<div class="mark mark-2"></div>
<div class="mark mark-3"></div>
<span class="mark-num num-1">1</span>
<span class="mark-num num-2">2</span>
<span class="mark-num num-3">3</span>

</body>
</html>
```

FILE: styles.css
```css
* {
    box-sizing: border-box;
}

body {
    margin: 0;
    width: 2570px;
    height: 1600px;
    overflow: hidden;
    position: relative;
    font-family: "Noto Sans", Roboto, sans-serif;
    font-size: 20.2px;
    color: #16191f;
    background-color: #f2f3f3;
}

p, h2 {
    margin: 0;
}

button {
    font-family: inherit;
    border: none;
    background: none;
    padding: 0;
}

.defs {
    position: absolute;
}

/* browser chrome */
.tabstrip {
    height: 60px;
    display: flex;
    align-items: flex-end;
    background-color: #1a3a41;
    color: #fff;
    font-family: Roboto, sans-serif;
}

.tab-menu {
    width: 41px;
    height: 42px;
    margin: 0 6px 9px 19px;
    border-radius: 14px;
    background-color: #275a63;
    display: flex;
    align-items: center;
    justify-content: center;
}

.tab {
    width: 120.9px;
    height: 51px;
    padding: 0 0 9px 16px;
    display: flex;
    align-items: center;
    gap: 12px;
    font-size: 18px;
    position: relative;
}

.tab::after {
    content: "";
    position: absolute;
    right: 0;
    top: 9px;
    height: 24px;
    width: 2px;
    background-color: #2f6670;
}

.tab-active {
    background-color: #275a63;
    border-radius: 16px 16px 0 0;
}

/* the small flares at the foot of the active tab */
.tab-active::before, .tab-active::after {
    content: "";
    position: absolute;
    top: auto;
    bottom: 0;
    width: 10px;
    height: 10px;
}

.tab-active::before {
    left: -10px;
    background: radial-gradient(circle at 0 0, transparent 10px, #275a63 10.5px);
}

.tab-active::after {
    right: -10px;
    background: radial-gradient(circle at 100% 0, transparent 10px, #275a63 10.5px);
}

.tab-after {
    padding-left: 14px;
}

.fav {
    width: 24px;
    height: 24px;
    flex: none;
}

.fav-letter {
    font-family: "Liberation Sans", sans-serif;
    font-size: 14px;
    font-weight: 700;
    fill: #fff;
    text-anchor: middle;
}

.tab-title {
    width: 66px;
    white-space: nowrap;
    -webkit-mask-image: linear-gradient(to right, #000 62%, transparent 82%);
    mask-image: linear-gradient(to right, #000 62%, transparent 82%);
}

.tab-title-short {
    width: 26px;
    -webkit-mask-image: linear-gradient(to right, #000 50%, transparent 90%);
    mask-image: linear-gradient(to right, #000 50%, transparent 90%);
}

.tab-close {
    width: 14px;
    height: 14px;
}

.tab-new {
    width: 40px;
    margin-bottom: 11px;
    font-size: 34px;
    line-height: 40px;
    font-weight: 300;
    text-align: center;
}

.win-controls {
    margin-left: auto;
    height: 60px;
    display: flex;
    align-items: center;
    padding-right: 28px;
    gap: 54px;
}

.win-btn {
    width: 14px;
    height: 14px;
}

.toolbar {
    height: 60px;
    padding-left: 15px;
    display: flex;
    align-items: center;
    background-color: #275a63;
    font-family: Roboto, sans-serif;
}

.tool-btn {
    width: 54px;
    height: 44px;
    flex: none;
    display: flex;
    align-items: center;
    justify-content: center;
}

.omnibox {
    width: 2065px;
    height: 51px;
    margin: 9px 13px 0 12px;
    border-radius: 26px;
    background-color: #234950;
    display: flex;
    align-items: center;
    padding-left: 8px;
    padding-right: 22px;
}

.toolbar .tool-btn {
    margin-top: 9px;
}

.site-btn {
    width: 35px;
    height: 35px;
    border-radius: 50%;
    background-color: #2f5d65;
    display: flex;
    align-items: center;
    justify-content: center;
}

.url {
    margin-left: 12px;
    color: #b5c6c9;
    font-size: 20.6px;
    white-space: nowrap;
}

.url-host {
    color: #fff;
}

.star {
    margin-left: auto;
}

.tool-sep {
    width: 2px;
    height: 26px;
    margin: 9px 13px 0 12px;
    background-color: #1a3a41;
}

.avatar {
    width: 30px;
    height: 30px;
    border-radius: 50%;
    background-color: #5c6bc0;
    color: #fff;
    font-size: 14px;
    line-height: 30px;
    text-align: center;
}

.bookmarks {
    height: 62px;
    padding-left: 31px;
    display: grid;
    grid-template-columns: 177px 229px 195px 225px 216px 138px 162px 223px 223px 165px 226px 290px 40px;
    align-items: center;
    background-color: #275a63;
    border-bottom: 2px solid #4d7a82;
    color: #fff;
    font-family: Roboto, sans-serif;
    font-size: 18px;
}

.bm {
    display: flex;
    align-items: center;
    gap: 10px;
    white-space: nowrap;
}

.fav-sm {
    width: 24px;
    height: 24px;
    flex: none;
}

.bm-more {
    font-size: 26px;
    line-height: 30px;
}

/* page with its scrollbar */
.page {
    height: 1346px;
    display: flex;
}

.page-col {
    width: 2547px;
    display: flex;
    flex-direction: column;
}

.scrollbar {
    width: 23px;
    display: flex;
    flex-direction: column;
    align-items: center;
    background-color: #f1f1f1;
    color: #505050;
}

.scroll-arrow {
    height: 25px;
    font-size: 12px;
    line-height: 25px;
}

.scroll-thumb {
    width: 100%;
    height: 1098px;
    margin: 198px 0 0;
    background-color: #c1c1c1;
}

.aws-nav {
    height: 60px;
    flex: none;
    display: flex;
    align-items: center;
    padding-left: 36px;
    background-color: #232f3e;
    border-bottom: 2px solid #414b58;
    color: #fff;
    font-size: 18.3px;
}

.aws-logo {
    width: 73px;
    height: 38px;
    border-right: 1px solid #414b58;
    display: flex;
    flex-direction: column;
    justify-content: center;
}

.aws-word {
    font-family: Roboto, sans-serif;
    font-size: 25px;
    line-height: 20px;
    font-weight: 500;
}

.services {
    width: 153px;
    padding-left: 25px;
    display: flex;
    align-items: center;
    gap: 12px;
    white-space: nowrap;
    font-size: 17.7px;
}

.nav-search {
    width: 810px;
    height: 44px;
    display: flex;
    align-items: center;
    padding: 0 14px 0 18px;
    border: 1px solid #687078;
    border-radius: 2px;
    background-color: #16191f;
}

.nav-search-ph {
    margin-left: 14px;
    font-style: italic;
    font-size: 19.5px;
    color: #aab7b8;
}

.nav-search-key {
    margin-left: auto;
    color: #aab7b8;
    font-size: 20.5px;
}

.nav-right {
    margin-left: auto;
    display: flex;
    height: 38px;
}

.nav-cell {
    display: flex;
    align-items: center;
    justify-content: center;
    border-right: 1px solid #414b58;
    white-space: nowrap;
}

.cell-shell {
    width: 74px;
}

.cell-bell {
    width: 76px;
}

.cell-help {
    width: 73px;
}

.cell-global {
    width: 129px;
    gap: 9px;
}

.cell-user {
    width: 311px;
    border-right: none;
    justify-content: flex-start;
    padding-left: 25px;
    gap: 9px;
}

.nav-caret {
    width: 13px;
    height: 11px;
    fill: #fff;
}

/* console layout */
.console {
    flex: 1;
    min-height: 0;
    display: flex;
    overflow: hidden;
}

.side-rail {
    width: 71px;
    flex: none;
    padding: 20px 0 0 28px;
    background-color: #fff;
    border-right: 2px solid #c8cccc;
}

.content {
    flex: 1;
    display: flex;
}

.wizard-nav {
    width: 479px;
    flex: none;
    padding: 0 0 0 59px;
    font-size: 20.2px;
    line-height: 24px;
    color: #687078;
}

.editor {
    width: 1876px;
    flex: none;
}

.policy-head {
    height: 73px;
    display: flex;
    justify-content: space-between;
    padding: 0 30px 0 31px;
    background-color: #fafafa;
    border-bottom: 2px solid #aab7b8;
    box-shadow: 0 1px 1px rgba(0, 28, 36, 0.2);
}

.policy-title {
    font-size: 26px;
    font-weight: 600;
    line-height: 44px;
}

.policy-tools {
    display: flex;
    height: 47px;
    font-size: 20.6px;
    font-weight: 600;
    color: #545b64;
}

.seg, .btn-actions, .btn-panel {
    display: flex;
    align-items: center;
    justify-content: center;
    padding-bottom: 2px;
    border: 1px solid #687078;
    border-top: none;
    background-color: #fff;
}

.seg {
    width: 124px;
}

.seg-on {
    background-color: #3273c0;
    border-color: #1e4f86;
    color: #fff;
    border-radius: 0 0 0 2px;
}

.seg-json {
    width: 122px;
    border-left: none;
    border-radius: 0 0 2px 0;
}

.btn-actions {
    width: 168px;
    margin-left: 19px;
    gap: 14px;
    border-radius: 0 0 2px 2px;
}

.actions-caret {
    width: 16px;
    height: 14px;
    fill: #545b64;
}

.btn-panel {
    width: 85px;
    margin-left: 19px;
    border-radius: 0 0 2px 2px;
}

/* service block */
.service-card {
    margin-top: 19px;
    background-color: #fff;
    border-bottom: 2px solid #879596;
    box-shadow: 0 0 1px rgba(0, 28, 36, 0.4);
}

.service-head {
    height: 114px;
    display: flex;
    align-items: flex-start;
    padding: 33px 30px 0 31px;
    background-color: #fafafa;
    border-bottom: 1px solid #eaeded;
}

.tri-big {
    width: 15px;
    height: 13px;
    margin: 6px 16px 0 0;
    fill: #16191f;
}

.service-name {
    font-size: 25px;
    font-weight: 600;
    line-height: 24px;
    height: 28px;
}

.service-sub {
    margin-top: 1px;
    display: flex;
    align-items: center;
    color: #414750;
}

.pill-allow {
    width: 69px;
    height: 33px;
    margin-right: 12px;
    border-radius: 17px;
    background-color: #3a8100;
    color: #fff;
    font-size: 17.5px;
    line-height: 33px;
    text-align: center;
}

.service-tools {
    margin-left: auto;
    display: flex;
    gap: 6px;
}

.btn-icon {
    width: 74px;
    height: 46px;
    border: 1px solid #545b64;
    border-radius: 2px;
    background-color: #fff;
    display: flex;
    align-items: center;
    justify-content: center;
}

.service-body {
    padding: 0 30px 30px 31px;
}

.intro {
    height: 30px;
    margin-top: 26px;
    line-height: 30px;
    color: #545b64;
}

.dotted {
    border-bottom: 2px dashed #687078;
}

.sec-head {
    height: 30px;
    display: flex;
    align-items: center;
    font-size: 19.8px;
    font-weight: 600;
    color: #545b64;
}

.sec-actions {
    margin-top: 24px;
}

.tri {
    width: 15px;
    height: 13px;
    margin-right: 13px;
    fill: #545b64;
}

.tri-right {
    width: 13px;
    height: 16px;
    margin-right: 15px;
}

.actions-row {
    display: flex;
    justify-content: space-between;
}

.actions-left {
    padding-left: 29px;
    flex: 1;
}

.hint {
    height: 24px;
    padding-left: 29px;
    font-size: 17.5px;
    line-height: 24px;
    color: #545b64;
}

.actions-left .hint {
    padding-left: 0;
}

.hint-actions {
    margin-top: 25px;
}

.filter {
    width: 879px;
    height: 50px;
    margin-top: 11px;
    padding: 0 14px 0 12px;
    display: flex;
    align-items: center;
    border: 2px solid #3273c0;
    border-radius: 3px;
}

.filter-text {
    margin-left: 13px;
    font-size: 19.8px;
}

.filter-x {
    margin-left: auto;
}

.group-name {
    height: 24px;
    margin-top: 51px;
    font-weight: 600;
    font-size: 19.5px;
    line-height: 24px;
}

.check-grid {
    height: 28px;
    margin-top: 19px;
    display: grid;
    grid-template-columns: 595px 1fr;
}

.check {
    display: flex;
    align-items: center;
}

.box {
    width: 21px;
    height: 21px;
    border: 1.5px solid #687078;
    border-radius: 3px;
    display: flex;
    align-items: center;
    justify-content: center;
}

.box-on {
    background-color: #3273c0;
    border-color: #3273c0;
}

.check-text {
    margin-left: 12px;
    padding-right: 12px;
    font-size: 19.8px;
    line-height: 28px;
    border-right: 1px solid #d5dbdb;
}

.info {
    margin-left: 12px;
    font-size: 17.5px;
    color: #545b64;
    line-height: 22px;
}

.effect {
    width: 180px;
    padding-top: 65px;
}

.effect-label {
    height: 24px;
    line-height: 24px;
}

.effect-opts {
    height: 24px;
    margin-top: 15px;
    display: flex;
    align-items: center;
}

.radio {
    width: 21px;
    height: 22px;
    flex: none;
}

.effect-allow {
    margin: 0 12px;
}

.effect-opts span:last-child {
    margin-left: 12px;
}

.divider {
    height: 1px;
    margin-left: -16px;
    margin-right: -16px;
    background-color: #eaeded;
}

.divider-a {
    margin-top: 48px;
}

.sec-res {
    margin-top: 22px;
}

.hint-res {
    margin-top: 25px;
}

.radio-row {
    height: 28px;
    padding-left: 29px;
    display: flex;
    align-items: center;
    gap: 12px;
}

.radio-all {
    margin-top: 14px;
}

.radio-spec {
    margin-top: 11px;
}

.warn {
    height: 30px;
    margin-top: 28px;
    padding-left: 29px;
    display: flex;
    align-items: center;
    gap: 6px;
    color: #8d6605;
}

.divider-b {
    margin-top: 29px;
}

.sec-req {
    margin-top: 22px;
}

.optional {
    margin-left: 12px;
    font-size: 21px;
}

.hint-req {
    margin-top: 13px;
}

/* below the block */
.btn-add {
    width: 320px;
    height: 46px;
    margin-top: 16px;
    padding-left: 26px;
    display: flex;
    align-items: center;
    gap: 13px;
    border: 1px solid #545b64;
    border-radius: 2px;
    background-color: #fff;
    color: #545b64;
    font-size: 20.7px;
    font-weight: 600;
    white-space: nowrap;
}

.status-bar {
    height: 63px;
    margin-top: 21px;
    padding-left: 20px;
    display: flex;
    align-items: center;
    background-color: #fff;
    border: 1px solid #d5dbdb;
    border-width: 1px 1px 2px 1px;
    color: #aab7b8;
}

.stat {
    display: flex;
    align-items: center;
    gap: 7px;
}

.stat-sec {
    width: 165px;
}

.stat-err {
    width: 145px;
}

.stat-warn {
    width: 180px;
}

.wizard-actions {
    margin-top: 29px;
    display: flex;
    align-items: center;
    justify-content: flex-end;
}

.btn-cancel {
    margin-right: 43px;
    font-size: 20.8px;
    font-weight: 600;
    color: #545b64;
}

.btn-next {
    width: 110px;
    height: 47px;
    border-radius: 2px;
    background-color: #f2990f;
    color: #16191f;
    font-size: 20px;
    font-weight: 600;
}

.tool-rail {
    width: 61px;
    flex: none;
    margin-left: 60px;
    background-color: #fff;
    border-left: 2px solid #c8cccc;
}

.rail-cell {
    height: 61px;
    display: flex;
    align-items: center;
    justify-content: center;
    border-bottom: 2px solid #eaeded;
}

.rail-second {
    border-bottom: none;
}

.aws-foot {
    height: 45px;
    flex: none;
    display: flex;
    align-items: center;
    padding: 0 24px 0 32px;
    background-color: #232f3e;
    border-top: 2px solid #414b58;
    color: #fff;
    font-size: 17.6px;
}

.foot-shell {
    display: flex;
    align-items: center;
    gap: 6px;
}

.foot-feedback {
    margin-left: 36px;
}

.foot-copy {
    margin-left: auto;
}

.foot-link {
    margin-left: 36px;
}

.foot-privacy {
    margin-left: 44px;
}

/* windows taskbar */
.taskbar {
    height: 72px;
    display: flex;
    align-items: center;
    position: relative;
    background: linear-gradient(to right, #1c1c1c, #201e1c 55%, #2a211e);
    border-top: 2px solid #35373a;
    color: #fff;
    font-family: Roboto, sans-serif;
}

.weather {
    width: 741px;
    padding-left: 38px;
    display: flex;
    align-items: center;
    gap: 8px;
}

.weather-text {
    display: flex;
    flex-direction: column;
    font-size: 18px;
    line-height: 25px;
}

.cond {
    color: #d0d0d0;
}

.weather-badge {
    position: absolute;
    left: 55px;
    top: 7px;
    width: 24px;
    height: 24px;
    border-radius: 50%;
    background-color: #ff99a4;
    color: #1d1d1d;
    font-size: 15px;
    line-height: 24px;
    text-align: center;
}

.win-logo {
    width: 36px;
    height: 36px;
    flex: none;
}

.task-search {
    width: 330px;
    height: 46px;
    margin-left: 19px;
    padding-left: 17px;
    display: flex;
    align-items: center;
    border-radius: 23px;
    background-color: #474543;
    border: 1px solid #5c5a58;
    overflow: hidden;
}

.task-search-text {
    margin-left: 14px;
    font-size: 19px;
    color: #e6e6e6;
}

.cheetah {
    margin-left: auto;
    margin-right: 3px;
    align-self: flex-end;
}

.task-apps {
    margin-left: 3px;
    display: flex;
}

.app {
    width: 66px;
    height: 60px;
    display: flex;
    align-items: center;
    justify-content: center;
    position: relative;
}

.app-icon {
    width: 36px;
    height: 36px;
}

.app-open {
    background-color: #452527;
    border-radius: 8px;
    width: 60px;
    margin: 0 3px;
}

.app-chrome {
    background-color: #343230;
    border-radius: 8px;
    width: 60px;
    margin: 0 3px;
}

.dot {
    position: absolute;
    bottom: 1px;
    left: 28px;
    width: 9px;
    height: 5px;
    border-radius: 3px;
    background-color: #8d8d8d;
}

.dot-pink {
    left: 25px;
    background-color: #ff99a4;
}

.dot-wide {
    left: 18px;
    width: 24px;
    background-color: #f47c6c;
}

.chrome-badge {
    position: absolute;
    left: 31px;
    top: 5px;
    width: 24px;
    height: 24px;
    border-radius: 50%;
    background-color: #5c6bc0;
    font-size: 13px;
    line-height: 24px;
    text-align: center;
}

.key-letter {
    font-family: "Liberation Sans", sans-serif;
    font-size: 11px;
    fill: #c4342a;
    text-anchor: middle;
}

.tray {
    margin-left: auto;
    width: 610px;
    display: grid;
    grid-template-columns: 48px 50px 50px 42px 74px 36px 36px 40px 109px 46px 68px;
    align-items: center;
    justify-items: center;
    padding-right: 11px;
}

.tray-i {
    width: 26px;
    height: 28px;
}

.tray-v {
    font-family: "Liberation Sans", sans-serif;
    font-size: 20px;
    font-weight: 700;
    fill: #c4342a;
    text-anchor: middle;
}

.tray-eng {
    font-size: 17px;
}

.clock {
    justify-self: end;
    display: flex;
    flex-direction: column;
    align-items: flex-end;
    font-size: 17px;
    line-height: 24px;
}

.copilot {
    position: relative;
    display: block;
    width: 36px;
    height: 44px;
}

.copilot-pre {
    position: absolute;
    left: 6px;
    bottom: 0;
    width: 28px;
    height: 14px;
    border-radius: 3px;
    background-color: #f5c518;
    color: #1d1d1d;
    font-size: 10px;
    font-weight: 700;
    line-height: 14px;
    text-align: center;
}

/* red boxes and numbers */
.mark {
    position: absolute;
    border: 4px solid #dc2a2a;
}

.mark-1 {
    left: 508px;
    top: 325px;
    width: 391px;
    height: 118px;
}

.mark-2 {
    left: 550px;
    top: 585px;
    width: 427px;
    height: 214px;
}

.mark-3 {
    left: 2283px;
    top: 1387px;
    width: 219px;
    height: 80px;
}

.mark-num {
    position: absolute;
    font-family: "Liberation Sans", sans-serif;
    font-size: 42px;
    line-height: 48px;
    color: #111;
}

.num-1 {
    left: 966px;
    top: 380px;
}

.num-2 {
    left: 1059px;
    top: 713px;
}

.num-3 {
    left: 2441px;
    top: 1341px;
}
```
